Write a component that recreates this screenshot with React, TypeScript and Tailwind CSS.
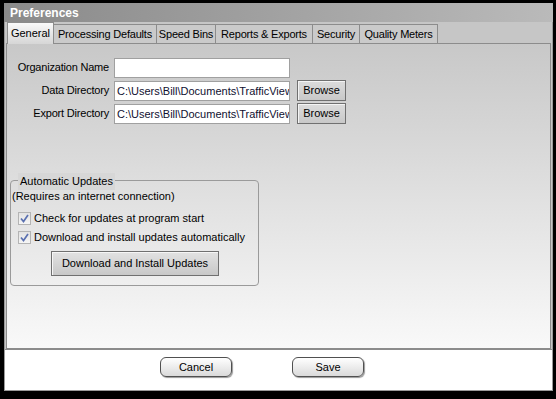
import React from 'react';

const font = { fontFamily: '"Liberation Sans", Arial, sans-serif' };

const tabs = [
    { label: 'General', w: 'w-[47px]' },
    { label: 'Processing Defaults', w: 'w-[103px]' },
    { label: 'Speed Bins', w: 'w-[59px]' },
    { label: 'Reports & Exports', w: 'w-[97px]' },
    { label: 'Security', w: 'w-[47px]' },
    { label: 'Quality Meters', w: 'w-[78px]' },
];

const Check: React.FC<{ label: string }> = ({ label }) => (
    <div className="flex items-center h-[19px]">
        <div className="w-[13px] h-[13px] ml-[7px] mr-[3px] border border-[#b4b4b4] bg-gradient-to-b from-[#e2e2e2] to-[#f6f6f6] flex items-center justify-center">
            <svg width="9" height="9" viewBox="0 0 9 9">
                <path d="M1 4.5 L3.5 7.5 L8 1" stroke="#5a70b0" strokeWidth="1.7" fill="none" />
            </svg>
        </div>
        <span>{label}</span>
    </div>
);

const Field: React.FC<{ label: string; value?: string; browse?: boolean }> = ({ label, value = '', browse }) => (
    <div className="flex items-center h-[23px]">
        <span className="w-[107px] text-right pr-[5px] tracking-[-0.2px]">{label}</span>
        <div className="w-[176px] h-[20px] bg-white border border-[#a0a0a0] overflow-hidden whitespace-nowrap pl-[2px] leading-[18px] text-[#101030]">
            {value}
        </div>
        {browse && (
            <button className="ml-[7px] w-[49px] h-[21px] border border-[#707070] bg-gradient-to-b from-[#dcdcdc] to-[#c8c8c8] shadow-[inset_1px_1px_0_#f4f4f4]">
                Browse
            </button>
        )}
    </div>
);

export default function App() {
    return (
        <div className="w-[556px] h-[399px] bg-black pt-[3px] pl-[4px] pr-[3px] pb-[8px] text-[11px] text-black" style={font}>
            <div className="w-full h-full flex flex-col">
                <div className="h-[19px] bg-gradient-to-r from-[#8a8a8a] to-[#bababa] flex items-center pl-[6px] text-white font-bold text-[12px]">
                    Preferences
                </div>
                <div className="flex-1 flex flex-col border-x border-b border-[#9a9a9a] bg-[#c6c6c6]">
                    <div className="h-[21px] flex items-end pl-[2px]">
                        {tabs.map((t, i) =>
                            i === 0 ? (
                                <div
                                    key={t.label}
                                    className={`${t.w} h-[22px] -mb-[1px] z-10 border border-b-0 border-[#8c8c8c] bg-gradient-to-b from-[#fafafa] to-[#d6d6d6] flex items-center justify-center`}
                                >
                                    {t.label}
                                </div>
                            ) : (
                                <div
                                    key={t.label}
                                    className={`${t.w} h-[19px] border border-l-0 border-b-0 border-[#8c8c8c] bg-[#cacaca] flex items-center justify-center tracking-[-0.2px]`}
                                >
                                    {t.label}
                                </div>
                            )
                        )}
                    </div>
                    <div className="h-[306px] mx-[1px] border border-[#8c8c8c] bg-gradient-to-b from-[#c8c8c8] to-[#f9f9f9] pt-[12px]">
                        <Field label="Organization Name" />
                        <Field label="Data Directory" value="C:\Users\Bill\Documents\TrafficView" browse />
                        <Field label="Export Directory" value="C:\Users\Bill\Documents\TrafficView" browse />
                        <div className="relative mt-[55px] ml-[3px] w-[249px] h-[106px] border border-[#9a9a9a] rounded-[4px] pt-[7px]">
                            <span className="absolute -top-[8px] left-[7px] px-[2px] bg-[#d7d7d7]">Automatic Updates</span>
                            <div className="pl-[1px] h-[15px]">(Requires an internet connection)</div>
                            <div className="mt-[6px]">
                                <Check label="Check for updates at program start" />
                                <Check label="Download and install updates automatically" />
                            </div>
                            <button className="ml-[40px] mt-[4px] w-[168px] h-[25px] border border-[#707070] bg-gradient-to-b from-[#e2e2e2] to-[#c8c8c8] shadow-[inset_1px_1px_0_#f6f6f6]">
                                Download and Install Updates
                            </button>
                        </div>
                    </div>
                    <div className="flex-1 bg-white border-t border-[#8c8c8c] flex gap-[60px] pt-[7px] pl-[155px]">
                        <button className="w-[72px] h-[20px] rounded-[6px] border border-[#505050] bg-gradient-to-b from-white to-[#dadada] shadow-[1px_1px_1px_#9a9a9a]">
                            Cancel
                        </button>
                        <button className="w-[72px] h-[20px] rounded-[6px] border border-[#505050] bg-gradient-to-b from-white to-[#dadada] shadow-[1px_1px_1px_#9a9a9a]">
                            Save
                        </button>
                    </div>
                </div>
            </div>
        </div>
    );
}
